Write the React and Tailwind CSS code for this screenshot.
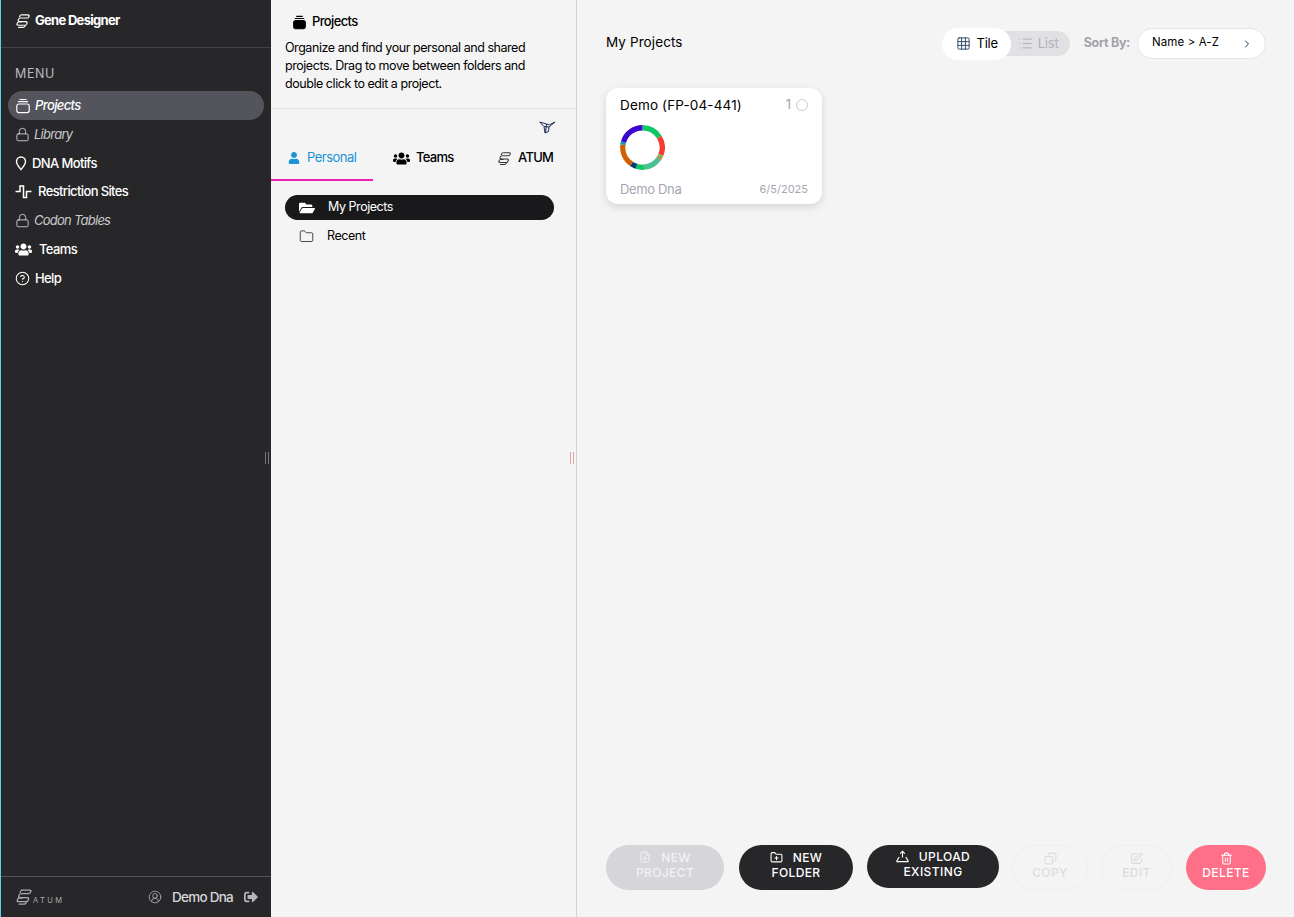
import {
  CircleHelp,
  CircleUserRound,
  ChevronRight,
  Copy,
  FilePlus,
  FolderPlus,
  Folder,
  Grid3x3,
  List,
  Lock,
  SquarePen,
  Trash2,
} from "lucide-react";
import { FaFolderOpen, FaSignOutAlt, FaUser, FaUsers } from "react-icons/fa";

const font = "font-['Inter','Liberation_Sans',sans-serif]";

function Helix({ className }) {
  return (
    <svg viewBox="0 0 16 16" fill="none" stroke="currentColor" strokeWidth="1.15" className={className}>
      <g transform="skewX(-14) translate(1.8 0)">
        <path d="M5.5 1.8h6a1.6 1.6 0 0 1 0 3.2H5a1.8 1.8 0 0 0 0 3.6h6a1.8 1.8 0 0 1 0 3.6H4.5a1.6 1.6 0 0 1 0-3.2h3" />
        <path d="M5.5 1.8a1.6 1.6 0 0 0-1.4 2.6" />
        <path d="M11.5 12.2a1.8 1.8 0 0 1-2 2.2H5" />
      </g>
    </svg>
  );
}

function ProjectsIcon({ solid, className }) {
  return (
    <svg viewBox="0 0 16 16" fill={solid ? "currentColor" : "none"} stroke="currentColor" strokeWidth="1.2" className={className}>
      <path d="M4.5 1.5h7M3 3.7h10" />
      <rect x="1.8" y="6" width="12.4" height="8.6" rx="2" />
    </svg>
  );
}

function PinIcon({ className }) {
  return (
    <svg viewBox="0 0 12 16" fill="none" stroke="currentColor" strokeWidth="1.5" className={className}>
      <path d="M6 14.6C3.6 11.4 1.2 9 1.2 5.9a4.8 4.8 0 0 1 9.6 0c0 3.1-2.4 5.5-4.8 8.7z" />
    </svg>
  );
}

function SitesIcon({ className }) {
  return (
    <svg viewBox="0 0 17 14" fill="none" stroke="currentColor" strokeWidth="1.5" className={className}>
      <path d="M0.5 6.5H5V1H8.5V12.5H11.5V6.5H16.5" />
    </svg>
  );
}

function FilterIcon({ className }) {
  return (
    <svg viewBox="0 0 17 13" fill="none" stroke="currentColor" strokeWidth="1" className={className}>
      <path d="M0.7 1 5 5.5l1 6.5 3.5-1.5.5-4.5 6-5-5.5 2.8L7.5 3z" />
      <path d="M5 5.5l5 .5M7.5 3l-1 9" />
    </svg>
  );
}

function UploadIcon({ className }) {
  return (
    <svg viewBox="0 0 14 14" fill="none" stroke="currentColor" strokeWidth="1.2" className={className}>
      <path d="M7 8V1.5M4.5 4 7 1.5 9.5 4" />
      <path d="M3.5 7.5 1 11.5v1h12v-1l-2.5-4" />
    </svg>
  );
}

// clockwise from the top, in degrees
const ringParts = [
  ["#0ec761", 0, 58],
  ["#f73b2e", 58, 112],
  ["#6cc24a", 112, 120],
  ["#e8503a", 120, 124],
  ["#4dc08f", 124, 176],
  ["#0ec761", 176, 198],
  ["#063a6e", 198, 214],
  ["#d15e00", 214, 278],
  ["#1697a8", 278, 286],
  ["#3a05cf", 286, 360],
];

function arc(start, end) {
  const r = 20.2;
  const point = (deg) => {
    const a = ((deg - 90) * Math.PI) / 180;
    return `${(23 + r * Math.cos(a)).toFixed(2)} ${(23 + r * Math.sin(a)).toFixed(2)}`;
  };
  return `M${point(start)}A${r} ${r} 0 ${end - start > 180 ? 1 : 0} 1 ${point(end)}`;
}

function Ring() {
  return (
    <svg width="45" height="45" viewBox="0 0 46 46" fill="none">
      {ringParts.map(([color, start, end]) => (
        <path key={start} d={arc(start, end)} stroke={color} strokeWidth="5.4" />
      ))}
    </svg>
  );
}

const menu = [
  { label: "Projects", icon: <ProjectsIcon className="h-4 w-4" />, active: true, gap: "gap-[4px]" },
  { label: "Library", icon: <Lock size={15} strokeWidth={1.5} />, locked: true, gap: "gap-[4px]" },
  { label: "DNA Motifs", icon: <PinIcon className="h-[15px] w-[12px]" />, gap: "gap-[5px]" },
  { label: "Restriction Sites", icon: <SitesIcon className="h-[14px] w-[17px]" />, gap: "gap-[6px]" },
  { label: "Codon Tables", icon: <Lock size={15} strokeWidth={1.5} />, locked: true, gap: "gap-[4px]" },
  { label: "Teams", icon: <FaUsers size={17} />, gap: "gap-[7px]" },
  { label: "Help", icon: <CircleHelp size={15} strokeWidth={1.7} />, gap: "gap-[5px]" },
];

function Sidebar() {
  return (
    <aside className="relative flex w-[271px] shrink-0 flex-col border-l border-[#5bd0ea] bg-[#272729] text-white">
      <div className="flex h-[48px] items-center gap-[4px] border-b border-[#434346] pb-[5px] pl-[14px]">
        <Helix className="h-4 w-4" />
        <span className="text-[13px] font-bold tracking-[-0.7px]">Gene Designer</span>
      </div>
      <div className="mt-[18px] pl-[14px] text-[12.5px] leading-4 tracking-[0.6px] text-[#b9bac0]">MENU</div>
      <nav className="mt-[9.3px] flex flex-col">
        {menu.map((item) => (
          <div
            key={item.label}
            className={`mx-[7px] flex h-[28.8px] items-center rounded-full pl-[7px] ${item.gap} ${
              item.active ? "bg-[#54545c]" : ""
            } ${item.locked ? "text-[#c9cace]" : "text-white"}`}
          >
            <span className="flex shrink-0 justify-start">{item.icon}</span>
            <span
              className={`whitespace-nowrap text-[13px] ${item.active ? "font-bold italic tracking-[-0.5px]" : ""} ${
                item.locked ? "italic tracking-[-0.75px]" : "font-medium tracking-[-0.62px]"
              }`}
            >
              {item.label}
            </span>
          </div>
        ))}
      </nav>
      <div className="mt-auto flex h-[41px] items-center justify-between border-t border-[#55555a] pl-[14px] pr-[13px] text-[#d6d7da]">
        <div className="flex items-end text-[#a9aab0]">
          <Helix className="h-[18px] w-[18px]" />
          <span className="text-[7.5px] leading-[10px] tracking-[2.4px]">ATUM</span>
        </div>
        <div className="flex items-center">
          <CircleUserRound size={14} strokeWidth={1.3} className="text-[#b5b6bb]" />
          <span className="ml-[10px] text-[13.5px] font-medium tracking-[-0.75px]">Demo Dna</span>
          <FaSignOutAlt size={14} className="ml-[11px] text-[#b5b6bb]" />
        </div>
      </div>
      <div className="absolute right-[2px] top-[452px] flex h-[12px] gap-[2px]">
        <span className="w-px bg-[#77777d]" />
        <span className="w-px bg-[#77777d]" />
      </div>
    </aside>
  );
}

function ProjectsPanel() {
  return (
    <section className="relative flex w-[306px] shrink-0 flex-col border-r border-[#d4d4d6] bg-[#f4f4f4] text-black">
      <div className="h-[109px] border-b border-[#e1e1e3] pl-[14px] pt-[13px]">
        <div className="flex h-[18px] items-center gap-[5px] pl-[7px]">
          <ProjectsIcon solid className="h-[15px] w-[15px]" />
          <span className="text-[13px] font-medium tracking-[-0.65px]">Projects</span>
        </div>
        <p className="mt-[8px] w-[270px] text-[12.5px] leading-[18px] tracking-[-0.45px]">
          Organize and find your personal and shared projects. Drag to move between folders and double click to edit a project.
        </p>
      </div>
      <div className="flex justify-end pr-[20px] pt-[12px]">
        <FilterIcon className="h-[13px] w-[17px] text-[#1c2a55]" />
      </div>
      <div className="mt-[9px] flex h-[38px] text-[13px] tracking-[-0.5px]">
        <div className="flex w-[102px] items-center gap-[7px] border-b-2 border-[#f020b0] pb-[7px] pl-[17px] text-[#1a93d8]">
          <FaUser size={12} />
          <span>Personal</span>
        </div>
        <div className="flex w-[103px] items-center gap-[6px] pb-[8px] pl-[20px] font-medium tracking-[-0.7px]">
          <FaUsers size={17} />
          <span>Teams</span>
        </div>
        <div className="flex items-center gap-[6px] pb-[8px] pl-[21px] font-medium tracking-[-0.7px]">
          <Helix className="h-[15px] w-[15px] text-[#333]" />
          <span>ATUM</span>
        </div>
      </div>
      <div className="mt-[14px] flex flex-col gap-[4px] pl-[14px] pr-[22px] text-[12.5px] tracking-[-0.45px]">
        <div className="flex h-[25px] items-center rounded-full bg-[#19191b] pl-[14px] text-white">
          <FaFolderOpen size={16} />
          <span className="ml-[13px]">My Projects</span>
        </div>
        <div className="flex h-[25px] items-center pl-[14px]">
          <Folder size={15} strokeWidth={1.3} className="text-[#222]" />
          <span className="ml-[13px]">Recent</span>
        </div>
      </div>
      <div className="absolute right-[2px] top-[452px] flex h-[12px] gap-[2px]">
        <span className="w-px bg-[#e7a3a3]" />
        <span className="w-px bg-[#e7a3a3]" />
      </div>
    </section>
  );
}

function ProjectCard() {
  return (
    <div className="mt-[29px] flex h-[116px] w-[216px] flex-col rounded-[12px] bg-white px-[14px] pt-[7px] shadow-[0_3px_8px_rgba(0,0,0,0.13)]">
      <div className="flex items-center justify-between">
        <span className="text-[13.5px] tracking-[0.15px] text-black">Demo (FP-04-441)</span>
        <div className="flex items-center gap-[5px] text-[13px] text-[#a3a3ad]">
          <span>1</span>
          <span className="h-[12px] w-[12px] rounded-full border border-[#c9c9d0]" />
        </div>
      </div>
      <div className="mt-[10px]">
        <Ring />
      </div>
      <div className="mt-auto flex items-center justify-between pb-[5px] text-[#a6a6b0]">
        <span className="text-[13px] tracking-[-0.35px]">Demo Dna</span>
        <span className="text-[11px]">6/5/2025</span>
      </div>
    </div>
  );
}

function ActionBar() {
  const label = "text-[12px] font-medium leading-[15px] tracking-[0.4px]";
  return (
    <div className="mt-auto flex items-start pb-[27px]">
      <div className={`flex h-[45px] w-[118px] flex-col items-center justify-center rounded-full bg-[#d6d6da] pb-[6px] text-[#f1f1f3] ${label}`}>
        <span className="flex items-center gap-[10px]">
          <FilePlus size={12} />
          NEW
        </span>
        <span>PROJECT</span>
      </div>
      <div className={`ml-[15px] flex h-[45px] w-[114px] flex-col items-center justify-center rounded-full bg-[#27272a] pb-[6px] text-white ${label}`}>
        <span className="flex items-center gap-[10px]">
          <FolderPlus size={13} />
          NEW
        </span>
        <span>FOLDER</span>
      </div>
      <div className={`ml-[14px] flex h-[43px] w-[132px] flex-col items-center justify-center rounded-full bg-[#27272a] pb-[6px] text-white ${label}`}>
        <span className="flex items-center gap-[10px]">
          <UploadIcon className="h-[13px] w-[13px]" />
          UPLOAD
        </span>
        <span>EXISTING</span>
      </div>
      <div className={`ml-[13px] flex h-[45px] w-[76px] flex-col items-center justify-center rounded-full border border-[#efeff0] pb-[4px] text-[#dcdce0] ${label}`}>
        <Copy size={13} className="-scale-x-100" />
        <span>COPY</span>
      </div>
      <div className={`ml-[13px] flex h-[45px] w-[71px] flex-col items-center justify-center rounded-full border border-[#efeff0] pb-[4px] text-[#dcdce0] ${label}`}>
        <SquarePen size={13} />
        <span>EDIT</span>
      </div>
      <div className={`ml-[14px] flex h-[45px] w-[80px] flex-col items-center justify-center rounded-full bg-[#ff7088] pb-[4px] text-white ${label}`}>
        <Trash2 size={13} />
        <span>DELETE</span>
      </div>
    </div>
  );
}

function MainArea() {
  return (
    <main className="flex min-w-0 flex-1 flex-col bg-[#f4f4f4] pl-[29px] pr-[28px]">
      <div className="flex items-center justify-between pt-[28px]">
        <h1 className="pb-[2px] text-[13.5px] tracking-[0.1px] text-black">My Projects</h1>
        <div className="flex items-center">
          <div className="flex h-[25px] w-[128px] items-center rounded-full bg-[#e1e1e4]">
            <div className="flex h-[32px] w-[69px] items-center justify-center gap-[5px] rounded-full bg-white pl-[2px] text-[13px] tracking-[-0.2px] text-black">
              <Grid3x3 size={15} strokeWidth={1.4} className="text-[#1b3a57]" />
              Tile
            </div>
            <div className="flex items-center gap-[5px] pl-[7px] text-[13px] tracking-[-0.2px] text-[#b1b1b9]">
              <List size={15} strokeWidth={1.6} />
              List
            </div>
          </div>
          <span className="ml-[14px] text-[12.5px] font-bold tracking-[-0.3px] text-[#a2a2aa]">Sort By:</span>
          <div className="ml-[7px] flex h-[31px] w-[129px] items-center justify-between rounded-full border border-[#e4e4e6] bg-white pb-[2px] pl-[14px] pr-[12px]">
            <span className="text-[11.5px] tracking-[0.1px] text-black">Name &gt; A-Z</span>
            <ChevronRight size={12} className="mt-[3px] text-[#1b3a57]" />
          </div>
        </div>
      </div>
      <ProjectCard />
      <ActionBar />
    </main>
  );
}

export default function App() {
  return (
    <div className={`flex h-[917px] w-full overflow-hidden ${font}`}>
      <Sidebar />
      <ProjectsPanel />
      <MainArea />
    </div>
  );
}
